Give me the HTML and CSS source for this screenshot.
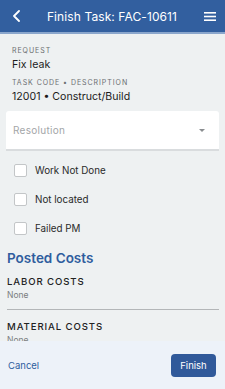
FILE: index.html
```html
<!DOCTYPE html>
<html>
<head>
<meta charset="utf-8">
<link rel="stylesheet" href="styles.css">
</head>
<body>
<div class="app">
  <header class="topbar">
    <svg class="back" width="10" height="12" viewBox="0 0 10 12"><path d="M7 1 L2 6 L7 11" fill="none" stroke="#fff" stroke-width="1.8" stroke-linecap="round" stroke-linejoin="round"/></svg>
    <div class="title">Finish Task: FAC-10611</div>
    <svg class="menu" width="12" height="9" viewBox="0 0 12 9"><rect x="0" y="0" width="12" height="1.6" fill="#fff"/><rect x="0" y="3.7" width="12" height="1.6" fill="#fff"/><rect x="0" y="7.4" width="12" height="1.6" fill="#fff"/></svg>
  </header>
  <main class="content">
    <section class="info">
      <div class="label">REQUEST</div>
      <div class="value">Fix leak</div>
      <div class="label second">TASK CODE • DESCRIPTION</div>
      <div class="value">12001 • Construct/Build</div>
    </section>
    <div class="select">
      <span class="placeholder">Resolution</span>
      <span class="caret"></span>
    </div>
    <ul class="checks">
      <li class="check"><span class="box"></span><span>Work Not Done</span></li>
      <li class="check"><span class="box"></span><span>Not located</span></li>
      <li class="check"><span class="box"></span><span>Failed PM</span></li>
    </ul>
    <h2 class="section-title">Posted Costs</h2>
    <div class="cost">
      <div class="cost-title">LABOR COSTS</div>
      <div class="cost-value">None</div>
    </div>
    <div class="cost last">
      <div class="cost-title">MATERIAL COSTS</div>
      <div class="cost-value">None</div>
    </div>
  </main>
  <footer class="footer">
    <span class="cancel">Cancel</span>
    <button class="finish">Finish</button>
  </footer>
</div>
</body>
</html>
```

FILE: styles.css
```css
html, body {
  margin: 0;
  padding: 0;
}
body {
  font-family: Inter, "Noto Sans", sans-serif;
  background: #eef1f2;
  color: #1c1c1c;
}
.app {
  width: 225px;
  height: 389px;
  display: flex;
  flex-direction: column;
  overflow: hidden;
}
.topbar {
  flex: 0 0 32px;
  background: #325f9f;
  border-bottom: 2px solid #8aa6cc;
  display: flex;
  align-items: center;
  padding: 0 9px 0 12px;
  color: #fff;
}
.back {
  flex: 0 0 10px;
}
.title {
  flex: 1;
  text-align: center;
  font-size: 12px;
  letter-spacing: 0.1px;
  padding-right: 2px;
}
.menu {
  flex: 0 0 12px;
}
.content {
  flex: 1;
  overflow: hidden;
}
.info {
  padding: 12px 12px 0;
}
.label {
  font-size: 7px;
  letter-spacing: 0.95px;
  color: #6b6e70;
  line-height: 10px;
}
.label.second {
  margin-top: 6px;
}
.value {
  font-size: 10.6px;
  line-height: 14px;
  margin-top: 2px;
  color: #1c1c1c;
}
.select {
  margin: 7px 6px 0;
  height: 38px;
  background: #fff;
  border-radius: 3px 3px 0 0;
  border-bottom: 2px solid #d9dcde;
  display: flex;
  align-items: center;
  justify-content: space-between;
  padding: 0 14px 0 7px;
}
.placeholder {
  font-size: 10px;
  color: #a3a6a8;
  letter-spacing: 0.3px;
}
.caret {
  width: 0;
  height: 0;
  border-left: 3px solid transparent;
  border-right: 3px solid transparent;
  border-top: 3px solid #8a8d90;
}
.checks {
  list-style: none;
  margin: 13px 0 0;
  padding: 0 0 0 14px;
  display: flex;
  flex-direction: column;
  gap: 16px;
}
.check {
  display: flex;
  align-items: center;
  gap: 8px;
  height: 13px;
  font-size: 9.8px;
  color: #2a2a2a;
}
.box {
  width: 11px;
  height: 11px;
  border: 1px solid #c3c6c8;
  border-radius: 2px;
  background: #fff;
}
.section-title {
  margin: 14px 0 0 7px;
  font-size: 13.5px;
  font-weight: 600;
  color: #2f5d9e;
  line-height: 18px;
}
.cost {
  margin: 0 6px 0 7px;
  padding: 9px 0 8px;
  border-bottom: 1px solid #b3b6b8;
}
.cost.last {
  border-bottom: none;
  padding-top: 11px;
}
.cost-title {
  font-size: 9.6px;
  letter-spacing: 0.9px;
  color: #222;
  line-height: 12px;
  font-weight: 500;
}
.cost-value {
  font-size: 8.5px;
  color: #7a7d80;
  line-height: 11px;
  margin-top: 2px;
}
.footer {
  flex: 0 0 48px;
  background: #edf2f9;
  display: flex;
  align-items: center;
  justify-content: space-between;
  padding: 0 9px 0 8px;
}
.cancel {
  font-size: 9.5px;
  color: #2f5d9e;
}
.finish {
  width: 45px;
  height: 23px;
  border: none;
  border-radius: 4px;
  background: #30599a;
  color: #fff;
  font-family: inherit;
  font-size: 9.5px;
  padding: 0;
}
```
